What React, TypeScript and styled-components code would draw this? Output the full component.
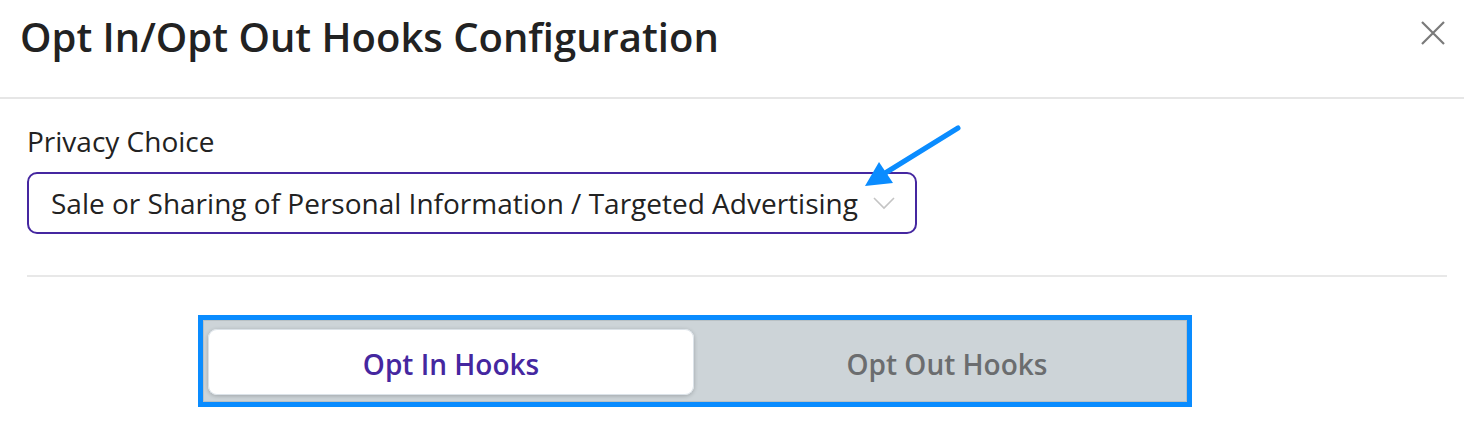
import { useState } from "react";
import styled, { createGlobalStyle } from "styled-components";

const GlobalStyle = createGlobalStyle`
  html, body {
    margin: 0;
    padding: 0;
    background: #ffffff;
    font-family: "Open Sans", "Noto Sans", sans-serif;
    color: #222222;
  }
`;

const Modal = styled.div`
  position: relative;
  width: 1464px;
  height: 426px;
  overflow: hidden;
  background: #ffffff;
`;

const Header = styled.header`
  display: flex;
  align-items: flex-start;
  justify-content: space-between;
  height: 99px;
  padding: 0 20px 0 20px;
  border-bottom: 2px solid #e6e6e6;
  box-sizing: border-box;
`;

const Title = styled.h1`
  margin: 9px 0 0 0;
  font-size: 40px;
  line-height: normal;
  font-weight: 600;
  color: #222222;
`;

const CloseButton = styled.button`
  display: flex;
  align-items: center;
  justify-content: center;
  width: 28px;
  height: 28px;
  padding: 0;
  margin-top: 19px;
  margin-right: -3px;
  border: none;
  background: transparent;
  cursor: pointer;
`;

const Body = styled.div`
  padding: 23px 17px 0 27px;
`;

const Label = styled.label`
  display: block;
  font-size: 28px;
  line-height: normal;
  color: #222222;
`;

const SelectBox = styled.div`
  display: inline-flex;
  align-items: center;
  gap: 15px;
  margin-top: 12px;
  height: 62px;
  padding: 0 20px 0 22px;
  border: 2px solid #4527a0;
  border-radius: 10px;
  box-sizing: border-box;
  font-size: 28px;
  color: #222222;
  cursor: pointer;
`;

const Divider = styled.hr`
  margin: 41px 0 0 0;
  border: none;
  border-top: 2px solid #e8e8e8;
`;

const TabFrame = styled.div`
  width: 994px;
  margin: 38px 0 0 171px;
  border: 5px solid #0a8cff;
  box-sizing: border-box;
`;

const TabTrack = styled.div`
  display: grid;
  grid-template-columns: 486px 1fr;
  padding: 8px 4px 6px 4px;
  background: #cdd4d8;
  border: 1px solid #b9c1c5;
`;

const Tab = styled.button<{ $active?: boolean }>`
  height: 66px;
  padding: 4px 0 0 ${(p) => (p.$active ? "0" : "18px")};
  border: none;
  border-radius: 9px;
  font-family: "Open Sans", "Noto Sans", sans-serif;
  font-size: 28px;
  font-weight: 600;
  cursor: pointer;
  background: ${(p) => (p.$active ? "#ffffff" : "transparent")};
  color: ${(p) => (p.$active ? "#4527a0" : "#6b6d6f")};
  box-shadow: ${(p) =>
    p.$active ? "0 1px 4px rgba(0, 0, 0, 0.22), inset 0 0 0 1px #dbe2e8" : "none"};
`;

const Arrow = styled.svg`
  position: absolute;
  left: 855px;
  top: 120px;
`;

function CloseIcon() {
  return (
    <svg width="26" height="26" viewBox="0 0 26 26">
      <path d="M2 2 L24 24 M24 2 L2 24" stroke="#7a7a7a" strokeWidth="2.2" />
    </svg>
  );
}

function Chevron() {
  return (
    <svg width="22" height="14" viewBox="0 0 22 14">
      <path d="M1 2 L11 12 L21 2" fill="none" stroke="#c4c4c4" strokeWidth="1.6" />
    </svg>
  );
}

export default function App() {
  const [tab, setTab] = useState<"in" | "out">("in");

  return (
    <>
      <GlobalStyle />
      <Modal>
        <Header>
          <Title>Opt In/Opt Out Hooks Configuration</Title>
          <CloseButton aria-label="Close">
            <CloseIcon />
          </CloseButton>
        </Header>
        <Body>
          <Label>Privacy Choice</Label>
          <SelectBox>
            <span>Sale or Sharing of Personal Information / Targeted Advertising</span>
            <Chevron />
          </SelectBox>
          <Divider />
          <TabFrame>
            <TabTrack>
              <Tab $active={tab === "in"} onClick={() => setTab("in")}>
                Opt In Hooks
              </Tab>
              <Tab $active={tab === "out"} onClick={() => setTab("out")}>
                Opt Out Hooks
              </Tab>
            </TabTrack>
          </TabFrame>
        </Body>
        {/* annotation arrow */}
        <Arrow width="110" height="70" viewBox="855 120 110 70">
          <line x1="958" y1="128" x2="882" y2="175" stroke="#0a8cff" strokeWidth="5" strokeLinecap="round" />
          <polygon points="865,186 879,162 893,183" fill="#0a8cff" />
        </Arrow>
      </Modal>
    </>
  );
}
